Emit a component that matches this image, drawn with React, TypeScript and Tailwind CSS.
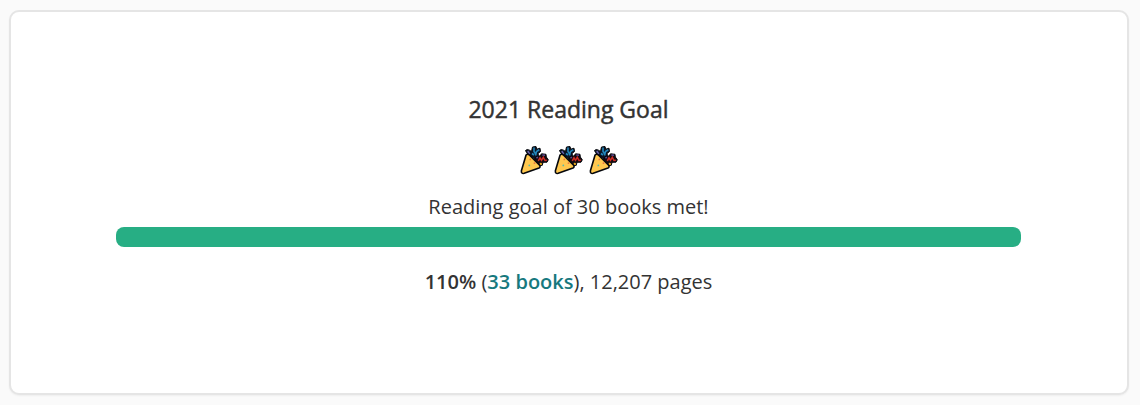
interface goal {
  year: number;
  target: number;
  booksRead: number;
  pages: string;
}

const goal: goal = { year: 2021, target: 30, booksRead: 33, pages: "12,207" };

const PartyPopper = () => (
  <svg viewBox="0 0 29 30" className="w-[29px] h-[30px]" aria-hidden="true">
    {/* streamers */}
    <path
      d="M9 10 L6.5 7.5 L5.5 5.5 Q7 3.8 9.5 5.2 L11.5 6.5 L12.5 2 L16 1.5 L16.8 4.2 L20 3.2 L20.5 6.5 L18 8.5 L18.5 10.5 L15.5 14 Z"
      fill="#0b1424"
      stroke="#05070c"
      strokeWidth="1"
      strokeLinejoin="round"
    />
    <path
      d="M14.5 14.5 L17 11 L20 11 L21.5 8.8 L26 9.3 L26.3 12 L28.3 14.8 L27 17.2 L23 17.3 L22.3 20.3 L18.5 20.8 Z"
      fill="#170b10"
      stroke="#05070c"
      strokeWidth="1"
      strokeLinejoin="round"
    />
    <path
      d="M14 2.5 L14 6.5 L16 9.5 M19.3 4.8 L16.5 6.5 L15.5 10.5 M12 8.5 L14 10"
      fill="none"
      stroke="#2387bb"
      strokeWidth="1.6"
    />
    <path d="M7.8 6 L9.7 9.2" stroke="#655fa9" strokeWidth="1.6" />
    <path d="M18.3 15.8 L20 12.8 L21.5 15.3 L23.3 12.3 L25 15.5 L26.8 15.2" fill="none" stroke="#d02d25" strokeWidth="1.5" />
    <path d="M22.3 10 L25 10.3 M16.5 13.2 L17.8 12" stroke="#5c4b91" strokeWidth="1.5" />
    <circle cx="20.8" cy="18.9" r="1.2" fill="#e5a91e" />
    {/* cone */}
    <path
      d="M6 10.2 Q7.2 8.2 9.4 10 L19.6 20.3 Q20.8 22 19 23 L4.2 28.3 Q1 29 1.4 25.8 Z"
      fill="#ffc84f"
      stroke="#05070c"
      strokeWidth="1.6"
      strokeLinejoin="round"
    />
    <circle cx="10.3" cy="14.4" r="0.9" fill="#e97842" />
    <circle cx="9.3" cy="20.4" r="0.9" fill="#58b9aa" />
    <circle cx="14.5" cy="18.2" r="0.9" fill="#e97842" />
  </svg>
);

const App = () => {
  const percent = Math.round((goal.booksRead / goal.target) * 100);

  return (
    <div className="h-[405px] bg-[#fafafa] pt-2.5 pl-[9px] font-['Open_Sans',sans-serif] text-[#333333]">
      <div className="flex h-[385px] w-[1120px] flex-col items-center rounded-[10px] border-2 border-[#e5e5e5] bg-white pt-[81px] pr-px shadow-xs">
        <h2 className="text-[23px] leading-8 font-medium [-webkit-text-stroke:0.45px_#333333]">
          {goal.year} Reading Goal
        </h2>
        <div className="mt-5 flex gap-[5.5px]">
          {[0, 1, 2].map((i) => (
            <PartyPopper key={i} />
          ))}
        </div>
        <p className="mt-[17px] text-xl leading-[30px]">
          Reading goal of {goal.target} books met!
        </p>
        <div className="mt-[5px] mr-px h-5 w-[905px] overflow-hidden rounded-lg bg-gray-200">
          <div
            className="h-full bg-[#27ae84]"
            style={{ width: `${Math.min(percent, 100)}%` }}
          />
        </div>
        <p className="mt-5 text-xl leading-[30px]">
          <span className="font-semibold">{percent}%</span> (
          <a className="font-semibold text-[#17797e]">{goal.booksRead} books</a>
          ), {goal.pages} pages
        </p>
      </div>
    </div>
  );
};

export default App;
